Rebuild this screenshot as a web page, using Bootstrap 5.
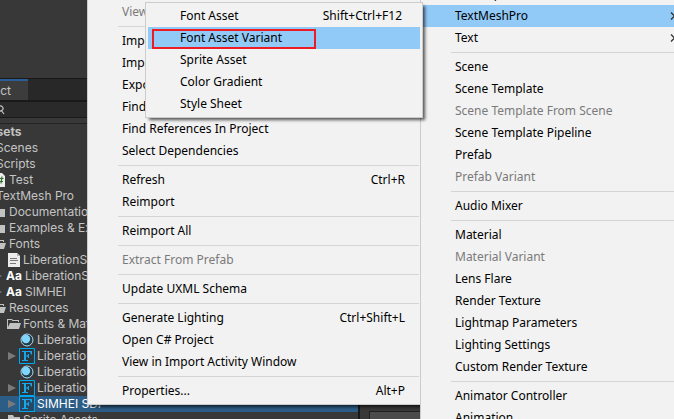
<!DOCTYPE html>
<html lang="en">
<head>
<meta charset="utf-8">
<meta name="viewport" content="width=device-width, initial-scale=1">
<title>Project – Assets</title>
<link href="https://cdn.jsdelivr.net/npm/bootstrap@5.3.0/dist/css/bootstrap.min.css" rel="stylesheet">
<style>
body{background:#383838;font-family:Inter,"Liberation Sans",sans-serif;font-size:12px;color:#c4c4c4}
.editor{height:100vh}
.scene-view{flex:0 0 78px;background:#383838}
.tab-strip{flex:0 0 22px;border-top:1px solid #191919;background:#282828}
.tab-strip button{width:28px;padding:0;border:0;border-top:2px solid #2c5d97;background:#3c3c3c;color:#c4c4c4;line-height:20px}
.tab-strip button span{margin-right:17px}
.search-bar{flex:0 0 18px;border-top:2px solid #191919;border-bottom:1px solid #191919;background:#2a2a2a}
.tool-line{flex:0 0 6px;border-bottom:1px solid #232323}
.tree{list-style:none}
.tree li{height:16px;line-height:16px;gap:3px;white-space:nowrap}
.tree li svg{flex:none}
.tree .nested{padding-left:7px;gap:2px}
.cut{margin-left:-8px}
.cut-short{margin-left:-4px}
.cut-icon{margin-left:-19px}
.mark-edge{margin-left:-6px;margin-right:1px}
.picked{background:#2c5d87;color:#fff}
.inspector{left:358px;right:0;top:404px;height:15px;border-left:2px solid #191919;background:#383838;padding:7px 0 0 9px}
.inspector div{height:8px;border:1px solid #202020;border-bottom:0;background:#4b4b4b}
.popup{position:absolute;background:#f2f2f2;border:1px solid #ccc;padding:2px;box-shadow:3px 3px 3px -1px rgba(0,0,0,.65);font-family:"Noto Sans","Open Sans",sans-serif;font-size:12px;color:#000}
.popup button{display:flex;justify-content:space-between;align-items:center;width:100%;height:22px;border:0;background:none;padding:0 14px 0 32px;color:#000;line-height:16px;white-space:nowrap;text-align:left}
.popup button:disabled{color:#7a7a7a}
.popup button.lit{background:#91c9f7}
.popup hr{margin:3px 0 3px 28px;border:0;border-top:1px solid #d4d4d4;opacity:1}
.assets-menu{left:87px;top:-2px;width:335px}
.create-menu{left:420px;right:-9px;top:-20px}
.create-menu button{padding-right:4px}
.font-menu{left:145px;top:2px;width:278px}
.font-menu button{padding-right:18px}
.outline-box{position:absolute;left:152px;top:29px;width:164px;height:20px;border:2px solid #ed1c24;pointer-events:none}
</style>
<script src="https://cdn.jsdelivr.net/npm/bootstrap@5.3.0/dist/js/bootstrap.bundle.min.js"></script>
</head>
<body class="overflow-hidden">
<svg class="d-none">
<symbol id="folder" viewBox="0 0 14 12"><path fill="#c2c2c2" d="M1 1h5l1 2h6v8H1z"/></symbol>
<symbol id="open" viewBox="0 0 14 12"><path fill="#c2c2c2" d="M0 1h5l1 1h6v2h-1V3H5.500L4.500 2H1v7l2-4h11l-2 6H0z"/></symbol>
<symbol id="doc" viewBox="0 0 14 14"><path fill="#ececec" d="M1 0h9l3 3v11H1z"/><path fill="#b5b5b5" d="M10 0l3 3h-3z"/><path stroke="#777" d="M3 5.500h7M3 7.500h8M3 10.500h6"/></symbol>
<symbol id="script" viewBox="0 0 14 14"><path fill="#ececec" d="M1 0h9l3 3v11H1z"/><path fill="none" stroke="#267326" stroke-width="1.200" d="M7 3.500l-1 7M10 3.500l-1 7M4.500 5.500h7M4 8.500h7"/></symbol>
<symbol id="ball" viewBox="0 0 14 14"><circle cx="7" cy="7" r="6" fill="#263b45" stroke="#a8dcf5"/><circle cx="6" cy="6" r="4.200" fill="#7fd6fd"/></symbol>
<symbol id="glyph" viewBox="0 0 16 16"><path fill="#20343e" fill-opacity=".5" stroke="#00a8f3" d="M.5.5h15v15H.5z"/><path fill="#14a9ee" d="M3 3h10v3.500h-1L11 4H7v3.500h1.500L9 6h1v4H9l-.5-1.500H7V12h2v1H3v-1h2V4H3z"/></symbol>
<symbol id="closed" viewBox="0 0 8 10"><path fill="#7a7a7a" d="M0 1l8 4-8 4z"/></symbol>
<symbol id="chev" viewBox="0 0 6 8"><path fill="none" stroke="#333" stroke-width="1.300" d="M1 .5L4.500 4 1 7.500"/></symbol>
</svg>
<main class="editor d-flex flex-column overflow-hidden">
<section class="scene-view"></section>
<div class="tab-strip d-flex overflow-hidden"><button type="button" class="d-flex justify-content-end"><span>Project</span></button></div>
<div class="search-bar d-flex align-items-center"><svg width="6" height="10" viewBox="0 0 6 10"><path fill="none" stroke="#c4c4c4" stroke-width="1.200" d="M-1 1.500a2.500 2.500 0 1 1 0 4M1 5l3 4"/></svg></div>
<div class="tool-line"></div>
<ul class="tree mb-0 p-0">
<li class="d-flex align-items-center fw-bold"><span class="cut-icon">Assets</span></li>
<li class="d-flex align-items-center"><span class="cut-short">Scenes</span></li>
<li class="d-flex align-items-center"><span class="cut-short">Scripts</span></li>
<li class="d-flex align-items-center"><svg class="cut" width="14" height="14"><use href="#script"/></svg>Test</li>
<li class="d-flex align-items-center"><span class="cut-short">TextMesh Pro</span></li>
<li class="d-flex align-items-center"><svg class="cut" width="14" height="12"><use href="#folder"/></svg>Documentation</li>
<li class="d-flex align-items-center"><svg class="cut" width="14" height="12"><use href="#folder"/></svg>Examples &amp; Extras</li>
<li class="d-flex align-items-center"><svg class="cut" width="14" height="12"><use href="#open"/></svg>Fonts</li>
<li class="d-flex align-items-center nested"><svg width="14" height="14"><use href="#doc"/></svg>LiberationSans</li>
<li class="d-flex align-items-center"><svg class="mark-edge" width="8" height="10"><use href="#closed"/></svg><b class="text-white">Aa</b>LiberationSans</li>
<li class="d-flex align-items-center"><svg class="mark-edge" width="8" height="10"><use href="#closed"/></svg><b class="text-white">Aa</b>SIMHEI</li>
<li class="d-flex align-items-center"><svg class="cut" width="14" height="12"><use href="#open"/></svg>Resources</li>
<li class="d-flex align-items-center nested"><svg width="14" height="12"><use href="#open"/></svg>Fonts &amp; Materials</li>
<li class="d-flex align-items-center nested"><svg width="10" height="10"></svg><svg width="16" height="14"><use href="#ball"/></svg>LiberationSans</li>
<li class="d-flex align-items-center nested"><svg width="10" height="10"><use href="#closed"/></svg><svg width="16" height="16"><use href="#glyph"/></svg>LiberationSans</li>
<li class="d-flex align-items-center nested"><svg width="10" height="10"></svg><svg width="16" height="14"><use href="#ball"/></svg>LiberationSans</li>
<li class="d-flex align-items-center nested"><svg width="10" height="10"><use href="#closed"/></svg><svg width="16" height="16"><use href="#glyph"/></svg>LiberationSans</li>
<li class="d-flex align-items-center nested picked"><svg width="10" height="10"><use href="#closed"/></svg><svg width="16" height="16"><use href="#glyph"/></svg>SIMHEI SDF</li>
<li class="d-flex align-items-center nested"><svg width="14" height="12"><use href="#folder"/></svg>Sprite Assets</li>
</ul>
</main>
<aside class="inspector position-absolute"><div></div></aside>
<nav class="popup assets-menu" aria-label="Assets">
<button type="button" disabled>View</button><hr>
<button type="button">Import</button>
<button type="button">Import</button>
<button type="button">Export</button>
<button type="button">Find</button>
<button type="button">Find References In Project</button>
<button type="button">Select Dependencies</button><hr>
<button type="button">Refresh<span>Ctrl+R</span></button>
<button type="button">Reimport</button><hr>
<button type="button">Reimport All</button><hr>
<button type="button" disabled>Extract From Prefab</button><hr>
<button type="button">Update UXML Schema</button><hr>
<button type="button">Generate Lighting<span>Ctrl+Shift+L</span></button>
<button type="button">Open C# Project</button>
<button type="button">View in Import Activity Window</button><hr>
<button type="button">Properties...<span>Alt+P</span></button>
</nav>
<nav class="popup create-menu" aria-label="Create">
<button type="button">C# Script</button>
<button type="button" class="lit">TextMeshPro<svg width="6" height="8"><use href="#chev"/></svg></button>
<button type="button">Text<svg width="6" height="8"><use href="#chev"/></svg></button><hr>
<button type="button">Scene</button>
<button type="button">Scene Template</button>
<button type="button" disabled>Scene Template From Scene</button>
<button type="button">Scene Template Pipeline</button>
<button type="button">Prefab</button>
<button type="button" disabled>Prefab Variant</button><hr>
<button type="button">Audio Mixer</button><hr>
<button type="button">Material</button>
<button type="button" disabled>Material Variant</button>
<button type="button">Lens Flare</button>
<button type="button">Render Texture</button>
<button type="button">Lightmap Parameters</button>
<button type="button">Lighting Settings</button>
<button type="button">Custom Render Texture</button><hr>
<button type="button">Animator Controller</button>
<button type="button">Animation</button>
</nav>
<nav class="popup font-menu" aria-label="TextMeshPro">
<button type="button">Font Asset<span>Shift+Ctrl+F12</span></button>
<button type="button" class="lit">Font Asset Variant</button>
<button type="button">Sprite Asset</button>
<button type="button">Color Gradient</button>
<button type="button">Style Sheet</button>
</nav>
<div class="outline-box"></div>
</body>
</html>
